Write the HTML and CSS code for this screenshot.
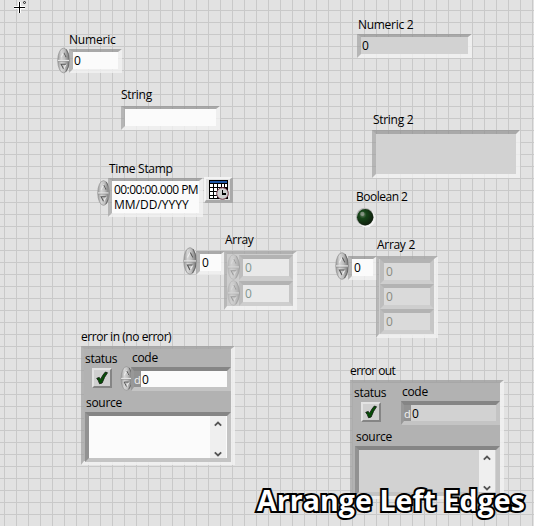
FILE: index.html
```html
<!DOCTYPE html>
<html lang="en">
<head>
<meta charset="utf-8">
<title>Front Panel</title>
<link rel="stylesheet" href="styles.css">
</head>
<body>
<svg class="defs" width="0" height="0" aria-hidden="true">
  <defs>
    <linearGradient id="metal" x1="0" x2="1">
      <stop offset="0" stop-color="#989898"/><stop offset=".3" stop-color="#d6d6d6"/><stop offset=".6" stop-color="#bebebe"/><stop offset="1" stop-color="#747474"/>
    </linearGradient>
    <radialGradient id="lamp" cx=".35" cy=".35" r=".65">
      <stop offset="0" stop-color="#70846c"/><stop offset=".35" stop-color="#174519"/><stop offset="1" stop-color="#10200e"/>
    </radialGradient>
    <symbol id="spin" viewBox="0 0 14 28">
      <ellipse cx="7" cy="14" rx="6.2" ry="13.3" fill="url(#metal)" stroke="#959595" stroke-width=".8"/>
      <path d="M9.5 26Q13.3 21 13.3 14Q13.3 7 10 2" fill="none" stroke="#666" stroke-width="1"/>
      <path d="M1 14H13" stroke="#e4e4e4" stroke-width="1.4"/>
      <path d="M1 15.2H13" stroke="#8d8d8d" stroke-width=".7"/>
      <path d="M4.4 10.5L7 5.5L9.6 10.5" fill="none" stroke="#ededed" stroke-width="1.2"/>
      <path d="M7.3 5.5L9.8 10.5" stroke="#555" stroke-width="1.1"/>
      <path d="M9.8 18L7.2 23" stroke="#ededed" stroke-width="1.2"/>
      <path d="M9.6 18H4.4L7 23" fill="none" stroke="#555" stroke-width="1.1"/>
    </symbol>
    <symbol id="tick" viewBox="0 0 13 13">
      <path d="M1.6 6.8L4 6L5.2 7.8Q7 3.6 9.6 1L11.6 1.6Q8.6 5.5 6.6 11.2L4.2 11.8Q3.4 8.8 1.6 6.8Z" fill="#064f06" stroke="#111d11" stroke-width=".8"/>
    </symbol>
    <symbol id="up" viewBox="0 0 8 6"><path d="M.8 4.7L4 1.5L7.2 4.7" fill="none" stroke="#555" stroke-width="1.8"/></symbol>
    <symbol id="down" viewBox="0 0 8 6"><path d="M.8 1.3L4 4.5L7.2 1.3" fill="none" stroke="#555" stroke-width="1.8"/></symbol>
  </defs>
</svg>
<main class="panel">
  <svg class="item cursor" viewBox="0 0 15 15">
    <path d="M6.5 2V13M1 7.5H12" stroke="#fff" stroke-width="3"/>
    <path d="M6.5 2V13M1 7.5H12" stroke="#000" stroke-width="1"/>
    <circle cx="11.5" cy="2.5" r="1" fill="none" stroke="#000" stroke-width=".8"/>
  </svg>

  <span class="item label numeric-label">Numeric</span>
  <div class="item numeric"><svg class="spinner"><use href="#spin"/></svg><div class="field white">0</div></div>

  <span class="item label numeric2-label">Numeric 2</span>
  <div class="item field numeric2">0</div>

  <span class="item label string-label">String</span>
  <div class="item field white string"></div>

  <span class="item label string2-label">String 2</span>
  <div class="item field string2"></div>

  <span class="item label time-label">Time Stamp</span>
  <div class="item time"><svg class="spinner"><use href="#spin"/></svg><div class="field white"><span>00:00:00.000 PM</span><span class="date">MM/DD/YYYY</span></div></div>
  <div class="item browse">
    <svg width="21" height="21" viewBox="0 0 21 21" shape-rendering="crispEdges">
      <rect width="19" height="19" fill="#000"/><rect x="1" y="1" width="17" height="2" fill="#1d55a4"/>
      <path d="M1 4h3v3H1zM5 4h3v3H5zM9 4h3v3H9zM13 4h2v3h-2zM16 4h2v3h-2zM1 8h3v3H1zM5 8h3v3H5zM9 8h3v3H9zM1 12h3v3H1zM5 12h3v3H5zM1 16h3v2H1zM5 16h3v2H5z" fill="#fff"/>
      <circle cx="13.5" cy="13.5" r="5.8" fill="#d0d0d0" stroke="#743848" stroke-width="1" shape-rendering="auto"/>
      <path d="M13.5 10V14H17" fill="none" stroke="#000" stroke-width="1.2"/>
    </svg>
  </div>

  <span class="item label bool-label">Boolean 2</span>
  <svg class="item led" viewBox="0 0 20 20"><circle cx="10.8" cy="10.8" r="8.7" fill="#f3f3f3"/><circle cx="9.3" cy="9.3" r="8.5" fill="#b5b5b5"/><circle cx="9.7" cy="9.7" r="7.8" fill="url(#lamp)"/><circle cx="7" cy="6.6" r="2" fill="#a5aba3" opacity=".6"/></svg>

  <span class="item label array-label">Array</span>
  <div class="item index index1"><svg class="spinner"><use href="#spin"/></svg><div class="field white">0</div></div>
  <div class="item array array1">
    <div class="cell"><svg class="spinner"><use href="#spin"/></svg><div class="field">0</div></div>
    <div class="cell"><svg class="spinner"><use href="#spin"/></svg><div class="field">0</div></div>
  </div>

  <span class="item label array2-label">Array 2</span>
  <div class="item index index2"><svg class="spinner"><use href="#spin"/></svg><div class="field white">0</div></div>
  <div class="item array array2">
    <div class="field">0</div><div class="field">0</div><div class="field">0</div>
  </div>

  <span class="item label errin-label">error in (no error)</span>
  <section class="item cluster errin">
    <div class="top">
      <div class="status"><span class="label">status</span><div class="check"><svg><use href="#tick"/></svg></div></div>
      <div class="code"><span class="label">code</span>
        <div class="entry"><svg class="spinner"><use href="#spin"/></svg><div class="field white"><i>d</i>0</div></div></div>
    </div>
    <span class="label source-label">source</span>
    <div class="field white source"><div class="scroll"><svg><use href="#up"/></svg><svg><use href="#down"/></svg></div></div>
  </section>

  <span class="item label errout-label">error out</span>
  <section class="item cluster errout">
    <div class="top">
      <div class="status"><span class="label">status</span><div class="check"><svg><use href="#tick"/></svg></div></div>
      <div class="code"><span class="label">code</span>
        <div class="entry"><div class="field"><i>d</i>0</div></div></div>
    </div>
    <span class="label source-label">source</span>
    <div class="field source"><div class="scroll"><svg><use href="#up"/></svg><svg><use href="#down"/></svg></div></div>
  </section>

  <h1 class="item caption">Arrange Left Edges</h1>
</main>
</body>
</html>
```
FILE: styles.css
```css
* { box-sizing: border-box; }
body { margin: 0; overflow: hidden; }
svg { display: block; }
.defs { position: absolute; }

.panel {
  position: relative;
  width: 534px;
  height: 526px;
  overflow: hidden;
  background-color: #e2e2e2;
  background-image:
    linear-gradient(90deg, #c9c9c9 1px, transparent 1px),
    linear-gradient(#c9c9c9 1px, transparent 1px);
  background-size: 12px 12px;
  background-position: 4px 10px;
  font: 12px/16px "Open Sans", "Noto Sans", sans-serif;
  letter-spacing: -0.3px;
  color: #000;
}

/* Controls sit freely on the panel canvas */
.item { position: absolute; }
.label { display: block; padding-top: 1px; margin-bottom: -1px; white-space: nowrap; }

.field {
  border: solid;
  border-width: 3px 4px 4px 4px;
  border-color: rgba(145, 145, 145, .7) rgba(244, 244, 244, .75) rgba(244, 244, 244, .75) rgba(160, 160, 160, .65);
  background: #d2d2d2;
  background-clip: padding-box;
  padding-left: 1px;
  line-height: 18px;
}
.white { background-color: #fbfbfb; }
.spinner { flex: none; width: 13px; height: 27px; }

.cursor { left: 13px; top: 0; width: 15px; height: 15px; }

.numeric-label { left: 69px; top: 31px; letter-spacing: -0.2px; }
.numeric { left: 57px; top: 47px; display: flex; }
.numeric .field { width: 53px; height: 24px; margin: 2px 0 0 -1px; padding-left: 1px; }

.numeric2-label { left: 358px; top: 16px; }
.numeric2 { left: 357px; top: 34px; width: 115px; height: 24px; }

.string-label { left: 121px; top: 86px; }
.string { left: 121px; top: 106px; width: 99px; height: 24px; }

.string2-label { left: 373px; top: 111px; }
.string2 { left: 372px; top: 130px; width: 148px; height: 48px; border-top-width: 4px; }

.time-label { left: 109px; top: 160px; }
.time { left: 97px; top: 178px; display: flex; }
.time .spinner { height: 30px; }
.time .field { width: 95px; height: 39px; margin-left: -2px; line-height: 15px; white-space: nowrap; padding-left: 2px; padding-top: 1px; }
.time .field span { display: block; letter-spacing: -0.55px; }
.time .field .date { letter-spacing: 0; }

.browse {
  left: 204px; top: 177px; width: 29px; height: 26px;
  display: grid; place-content: center;
  padding: 1px 0 0 2px;
  border: solid; border-width: 2px 3px 3px 2px;
  border-color: #f4f4f4 #a9a9a9 #a9a9a9 #f4f4f4;
  background: #e0e0e0;
}

.bool-label { left: 356px; top: 188px; letter-spacing: -0.5px; }
.led { left: 355px; top: 207px; width: 21px; height: 21px; }

.array-label { left: 225px; top: 231px; }
.array2-label { left: 377px; top: 236px; }
.index { display: flex; }
.index .spinner { width: 14px; height: 28px; }
.index .field { width: 29px; height: 24px; margin: 4px 0 0 -1px; padding-left: 2px; }
.index1 { left: 183px; top: 247px; }
.index2 { left: 335px; top: 252px; }

.array {
  border: solid;
  border-width: 3px 4px 4px 3px;
  border-color: rgba(165, 165, 165, .8) rgba(242, 242, 242, .85) rgba(242, 242, 242, .85) rgba(170, 170, 170, .75);
  background: #cdcdcd;
  background-clip: padding-box;
}
.array .field { color: #8a8a80; height: 25px; border-color: #b3b3b3 #c6c6c6 #cecece #bdbdbd; border-width: 4px; padding-left: 2px; }
.array1 { left: 224px; top: 251px; width: 73px; height: 59px; }
.cell { display: flex; height: 26px; }
.cell .spinner { opacity: .4; height: 26px; }
.array1 .field { width: 54px; margin: 1px 0 0 -1px; background-color: #e9e9e9; color: #82958f; }
.array2 { left: 376px; top: 256px; width: 62px; height: 82px; padding-left: 1px; }
.array2 .field { width: 54px; background-color: #dadada; }

.errin-label { left: 81px; top: 328px; letter-spacing: -0.45px; }
.errout-label { left: 350px; top: 362px; letter-spacing: -0.6px; }
.cluster {
  width: 154px; height: 119px;
  border: solid;
  border-width: 3px 4px 4px 3px;
  border-color: rgba(160, 160, 160, .8) rgba(242, 242, 242, .85) rgba(242, 242, 242, .85) rgba(160, 160, 160, .7);
  background: #b2b2b2;
  background-clip: padding-box;
}
.errin { left: 81px; top: 346px; }
.errout { left: 350px; top: 380px; }
.top { display: flex; height: 45px; }
.status { width: 36px; padding: 1px 0 0 1px; }
.check {
  width: 20px; height: 20px;
  margin: 2px 0 0 7px;
  display: grid; place-content: center;
  border: 2px solid; border-color: #e3e3e3 #858585 #858585 #e3e3e3;
  background: #d0d0d0;
}
.check svg { width: 14px; height: 14px; }
.code > .label { padding-left: 12px; }
.errout .code > .label { padding-left: 13px; }
.entry { display: flex; margin-top: 1px; }
.entry .spinner { height: 25px; }
.entry .field { display: flex; width: 100px; height: 24px; margin: 1px 0 0 -2px; padding: 0; }
.errout .entry .field { margin-left: 12px; width: 99px; }
.entry i { width: 7px; margin-right: 1px; background: #929292; color: #f2f2f2; font-style: normal; font-size: 11px; }
.cluster .field { border-width: 4px; border-color: #858585 #c4c4c4 #c4c4c4 #929292; }
.cluster .entry .field { border-left: 3px solid #989898; }
.source-label { padding-left: 2px; }
.cluster .source { width: 146px; height: 50px; margin: 2px 0 0 1px; padding: 0; display: flex; justify-content: flex-end; }
.errout .source-label { padding-left: 3px; }
.errout .source { width: 145px; margin-left: 2px; }
.scroll { width: 16px; margin-right: 1px; padding: 5px 4px 1px; background: #efefef; display: flex; flex-direction: column; justify-content: space-between; }
.scroll svg { width: 8px; height: 6px; }

.caption {
  left: 257px; top: 480px;
  margin: 0;
  font: bold 28.5px/40px "Open Sans", "Noto Sans", sans-serif;
  letter-spacing: 0.07px;
  white-space: nowrap;
  color: #fff;
  -webkit-text-stroke: 4px #000;
  paint-order: stroke fill;
}
```
